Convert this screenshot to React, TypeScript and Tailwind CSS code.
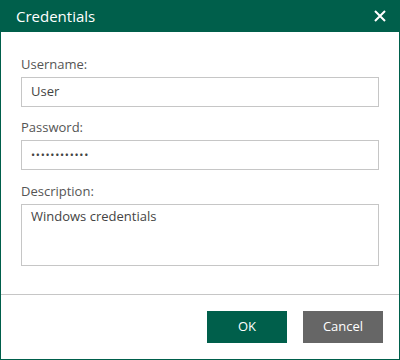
export default function App() {
  return (
    <div className="w-[400px] h-[360px] bg-white flex flex-col border-x border-b border-[#005f4b]" style={{ fontFamily: '"Open Sans", "Noto Sans", sans-serif' }}>
      <div className="h-[32px] bg-[#005f4b] flex items-center justify-between pl-[16px] pr-[13px] -mx-px shrink-0">
        <span className="text-white text-[15px]">Credentials</span>
        <svg width="14" height="14" viewBox="0 0 14 14">
          <path d="M2 2 L12 12 M12 2 L2 12" stroke="white" strokeWidth="2" />
        </svg>
      </div>
      <div className="flex flex-col px-[20px] pt-[23px] flex-1">
        <label className="text-[13px] text-[#555] leading-[18px]">Username:</label>
        <div className="mt-[4px] h-[30px] border border-[#c6c6c6] flex items-center px-[9px] text-[13px] text-[#444]">User</div>
        <label className="mt-[11px] text-[13px] text-[#555] leading-[18px]">Password:</label>
        <div className="mt-[4px] h-[30px] border border-[#c6c6c6] flex items-center px-[9px] text-[11px] text-[#444] tracking-[0.7px]">••••••••••••</div>
        <label className="mt-[12px] text-[13px] text-[#555] leading-[18px]">Description:</label>
        <div className="mt-[4px] h-[62px] border border-[#c6c6c6] px-[9px] pt-[2px] text-[13px] text-[#444]">Windows credentials</div>
      </div>
      <div className="h-[65px] border-t border-[#c6c6c6] flex items-start justify-end gap-[16px] pt-[16px] pr-[16px] shrink-0">
        <button className="w-[80px] h-[32px] bg-[#005f4b] text-white text-[13px]">OK</button>
        <button className="w-[80px] h-[32px] bg-[#666666] text-white text-[13px]">Cancel</button>
      </div>
    </div>
  );
}
